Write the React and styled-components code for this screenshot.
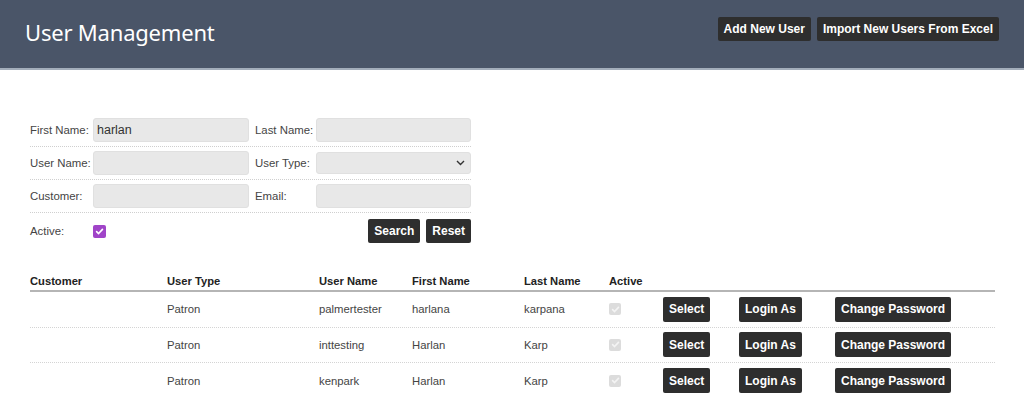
import React from "react";
import styled, { createGlobalStyle } from "styled-components";

const Global = createGlobalStyle`
  html, body { margin: 0; padding: 0; background: #fff; }
  body { font-family: "Liberation Sans", Arial, sans-serif; color: #333; }
  * { box-sizing: border-box; }
`;

const Header = styled.header`
  height: 70px;
  background: #4a5568;
  border-bottom: 2px solid #a3adba;
  display: flex;
  align-items: center;
  justify-content: space-between;
  padding: 0 25px 0 25px;
`;

const Title = styled.h1`
  margin: 0;
  font-family: "Noto Sans", "Open Sans", sans-serif;
  font-weight: 400;
  font-size: 22px;
  color: #fff;
  letter-spacing: -0.2px;
  padding-bottom: 4px;
`;

const HeaderActions = styled.div`
  display: flex;
  gap: 6px;
  padding-bottom: 10px;
`;

const DarkButton = styled.button`
  font-family: "Liberation Sans", Arial, sans-serif;
  font-weight: 700;
  font-size: ${(p) => p.$fs || "12px"};
  color: #fff;
  background: #2e2e2e;
  border: none;
  border-radius: 2px;
  height: ${(p) => p.$h || "24px"};
  padding: 0 ${(p) => p.$px || "6px"};
  cursor: pointer;
  white-space: nowrap;
`;

const Main = styled.main`
  padding: 44px 29px 0 30px;
`;

const Form = styled.div`
  width: 441px;
`;

const FormRow = styled.div`
  display: grid;
  grid-template-columns: 63px 156px 6px 61px 155px;
  align-items: center;
  height: ${(p) => p.$h || "33px"};
  border-bottom: ${(p) => (p.$last ? "none" : "1px dotted #cfcfcf")};
`;

const Label = styled.label`
  font-size: 11.4px;
  color: #444;
  white-space: nowrap;
  grid-column: ${(p) => p.$col};
`;

const Input = styled.input`
  grid-column: ${(p) => p.$col};
  height: 24px;
  width: 100%;
  border: 1px solid #e0e0e0;
  border-radius: 3px;
  background: #e8e8e8;
  font-family: "Liberation Sans", Arial, sans-serif;
  font-size: 12.5px;
  color: #333;
  padding: 0 3px;
  outline: none;
`;

const SelectBox = styled.div`
  grid-column: ${(p) => p.$col};
  height: 22px;
  border: 1px solid #e0e0e0;
  border-radius: 3px;
  background: #e8e8e8;
  display: flex;
  align-items: center;
  justify-content: flex-end;
  padding-right: 5px;
`;

const Check = styled.span`
  grid-column: 2;
  width: 13px;
  height: 13px;
  border-radius: 2px;
  background: #a044c8;
  display: flex;
  align-items: center;
  justify-content: center;
`;

const FormButtons = styled.div`
  grid-column: 4 / 6;
  display: flex;
  justify-content: flex-end;
  gap: 6px;
`;

const Table = styled.div`
  margin-top: 20px;
  width: 965px;
`;

const TRow = styled.div`
  display: grid;
  grid-template-columns: 137px 152px 93px 112px 85px 54px 76px 96px 160px;
  align-items: ${(p) => (p.$head ? "end" : "center")};
  height: ${(p) => (p.$head ? "23px" : "35.5px")};
  border-bottom: ${(p) =>
    p.$head ? "2px solid #b5b5b5" : p.$last ? "none" : "1px dotted #d4d4d4"};
  padding-bottom: ${(p) => (p.$head ? "3px" : "0")};
`;

const Th = styled.div`
  font-size: 11.2px;
  font-weight: 700;
  color: #222;
`;

const Td = styled.div`
  font-size: 11.3px;
  color: #444;
`;

const GreyCheck = styled.span`
  display: inline-flex;
  width: 12px;
  height: 12px;
  border-radius: 2px;
  background: #dcdcdc;
  align-items: center;
  justify-content: center;
`;

const Tick = ({ color }) => (
  <svg width="9" height="9" viewBox="0 0 10 10">
    <path d="M1.8 5.2 L4 7.3 L8.3 2.6" fill="none" stroke={color} strokeWidth="1.8" strokeLinecap="round" strokeLinejoin="round" />
  </svg>
);

const users = [
  { type: "Patron", user: "palmertester", first: "harlana", last: "karpana" },
  { type: "Patron", user: "inttesting", first: "Harlan", last: "Karp" },
  { type: "Patron", user: "kenpark", first: "Harlan", last: "Karp" },
];

export default function App() {
  return (
    <>
      <Global />
      <Header>
        <Title>User Management</Title>
        <HeaderActions>
          <DarkButton>Add New User</DarkButton>
          <DarkButton>Import New Users From Excel</DarkButton>
        </HeaderActions>
      </Header>
      <Main>
        <Form>
          <FormRow>
            <Label $col={1}>First Name:</Label>
            <Input $col={2} defaultValue="harlan" />
            <Label $col={4}>Last Name:</Label>
            <Input $col={5} />
          </FormRow>
          <FormRow>
            <Label $col={1}>User Name:</Label>
            <Input $col={2} />
            <Label $col={4}>User Type:</Label>
            <SelectBox $col={5}>
              <svg width="9" height="6" viewBox="0 0 9 6">
                <path d="M1 1 L4.5 4.5 L8 1" fill="none" stroke="#333" strokeWidth="1.4" />
              </svg>
            </SelectBox>
          </FormRow>
          <FormRow>
            <Label $col={1}>Customer:</Label>
            <Input $col={2} />
            <Label $col={4}>Email:</Label>
            <Input $col={5} />
          </FormRow>
          <FormRow $last $h="36px">
            <Label $col={1}>Active:</Label>
            <Check>
              <Tick color="#fff" />
            </Check>
            <FormButtons>
              <DarkButton>Search</DarkButton>
              <DarkButton>Reset</DarkButton>
            </FormButtons>
          </FormRow>
        </Form>
        <Table>
          <TRow $head>
            <Th>Customer</Th>
            <Th>User Type</Th>
            <Th>User Name</Th>
            <Th>First Name</Th>
            <Th>Last Name</Th>
            <Th>Active</Th>
            <Th />
            <Th />
            <Th />
          </TRow>
          {users.map((u, i) => (
            <TRow key={i} $last={i === users.length - 1}>
              <Td />
              <Td>{u.type}</Td>
              <Td>{u.user}</Td>
              <Td>{u.first}</Td>
              <Td>{u.last}</Td>
              <Td>
                <GreyCheck>
                  <Tick color="#f4f4f4" />
                </GreyCheck>
              </Td>
              <Td>
                <DarkButton $h="25px">Select</DarkButton>
              </Td>
              <Td>
                <DarkButton $h="25px">Login As</DarkButton>
              </Td>
              <Td>
                <DarkButton $h="25px">Change Password</DarkButton>
              </Td>
            </TRow>
          ))}
        </Table>
      </Main>
    </>
  );
}
